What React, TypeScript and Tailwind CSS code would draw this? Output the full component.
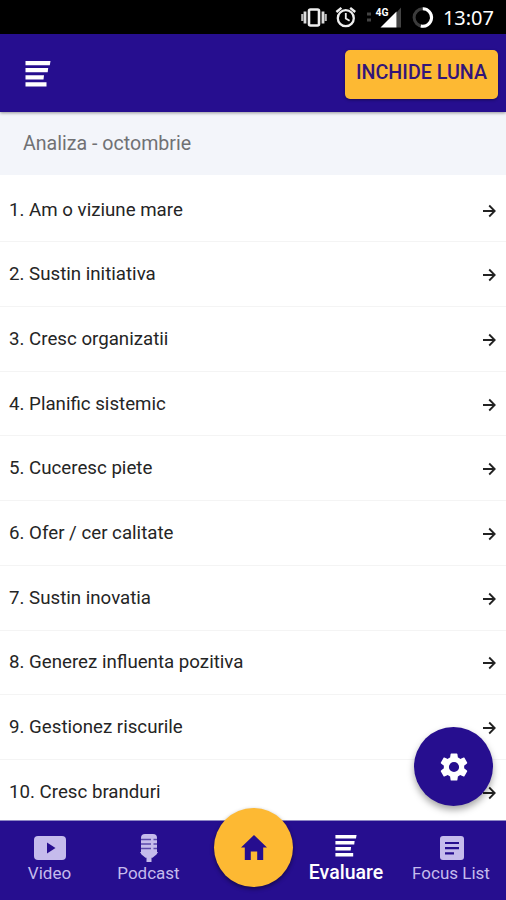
import type { ReactNode } from "react";

const items = [
  "Am o viziune mare",
  "Sustin initiativa",
  "Cresc organizatii",
  "Planific sistemic",
  "Cuceresc piete",
  "Ofer / cer calitate",
  "Sustin inovatia",
  "Generez influenta pozitiva",
  "Gestionez riscurile",
  "Cresc branduri",
];

function BarsIcon({ className }: { className: string }) {
  return (
    <svg viewBox="0 0 26 26" className={className} fill="currentColor">
      <path d="M.5 0h25L24.800 4.200H.5zM.5 7.100h22.700L22.700 11.300H.5zM.5 14.200h18.500L18.500 18.400H.5zM.5 21.300h21V25.500H.5z" />
    </svg>
  );
}

function StatusBar() {
  return (
    <div className="flex h-[34px] shrink-0 items-center justify-end bg-black pr-[12px] text-white">
      <svg width="144" height="34" viewBox="0 0 144 34" fill="none">
        {/* vibrate */}
        <rect x="19" y="9.500" width="10" height="16" rx="1.5" stroke="#eee" strokeWidth="2.600" />
        <path d="M15 11.500v12M33 11.500v12" stroke="#ddd" strokeWidth="2.800" />
        <path d="M12.300 14v7M35.700 14v7" stroke="#bbb" strokeWidth="2.200" />
        {/* alarm */}
        <circle cx="55.800" cy="18.200" r="8" stroke="#eee" strokeWidth="2.300" />
        <path d="M55.800 13v5.400l3.800 2.400" stroke="#eee" strokeWidth="1.800" />
        <path d="M46.400 12l5-4.200M65.200 12l-5-4.200" stroke="#eee" strokeWidth="2.400" />
        {/* signal */}
        <path d="M77 14h4M77 20h4" stroke="#444" strokeWidth="2.800" />
        <path d="M111 7.500v20h-4.500v-15z" fill="#444" />
        <path d="M90.500 27.500L106.500 11.500v16z" fill="#fff" />
        <text x="85.500" y="16.300" fill="#fff" fontSize="10.500" fontWeight="700" fontFamily="Roboto, sans-serif" textLength="13" lengthAdjust="spacingAndGlyphs">4G</text>
        {/* sync ring */}
        <circle cx="132.800" cy="17.500" r="8.700" stroke="#3c3c3c" strokeWidth="3" />
        <path d="M132.800 8.800a8.700 8.700 0 1 1-2 17.150" stroke="#fff" strokeWidth="3" />
      </svg>
      <span className="ml-[8px] w-[52px] pt-[2px] text-right font-['Noto_Sans',sans-serif] text-[20px] leading-none whitespace-nowrap">13:07</span>
    </div>
  );
}

function NavItem({ label, className, children }: { label: string; className: string; children: ReactNode }) {
  return (
    <button type="button" className={`flex shrink-0 flex-col items-center ${className}`}>
      <span className="flex h-[41px] items-center pt-[13px]">{children}</span>
      <span className="whitespace-nowrap leading-[22px]">{label}</span>
    </button>
  );
}

export default function App() {
  return (
    <div className="relative flex h-[900px] w-[506px] flex-col overflow-hidden bg-white font-[Roboto,sans-serif]">
      <StatusBar />

      <header className="z-10 flex h-[78px] shrink-0 items-center justify-between bg-[#260e8f] pl-[25px] pr-2 text-white shadow-[0_1px_3px_rgba(0,0,0,0.4)]">
        <button type="button" aria-label="Meniu" className="pt-[2px]">
          <BarsIcon className="size-[26px]" />
        </button>
        <button type="button" className="mt-[2px] h-[49px] w-[153px] rounded-[5px] bg-[#fdb933] pb-[2px] text-[19.700px] font-medium whitespace-nowrap text-[#33157a] shadow-[0_1px_3px_rgba(0,0,0,0.4)]">
          INCHIDE LUNA
        </button>
      </header>

      <h1 className="h-[63px] shrink-0 bg-[#f3f5fa] pl-[23px] text-[19.600px] leading-[64px] text-[#707174]">
        Analiza - octombrie
      </h1>

      <ul className="min-h-0 flex-1 overflow-hidden pt-[2.700px]">
        {items.map((item, i) => (
          <li key={item} className="flex h-[64.700px] items-center justify-between border-b border-[#f4f4f4] pr-[10px] pl-[9px] text-[18.700px] text-[#252525]">
            <span>{i + 1}. {item}</span>
            <svg width="14" height="14" viewBox="0 0 14 14" fill="none" stroke="#222" strokeWidth="1.800" className="mt-[2px]">
              <path d="M1 7h11.500M7.200 1.500L12.700 7l-5.500 5.500" />
            </svg>
          </li>
        ))}
      </ul>

      {/* settings button floats over the list */}
      <button type="button" aria-label="Setari" className="absolute top-[727px] left-[414px] flex size-[79px] items-center justify-center rounded-full bg-[#260e8f] text-white shadow-[0_4px_7px_rgba(0,0,0,0.35)]">
        <svg viewBox="0 0 24 24" className="size-[34px]" fill="currentColor">
          <path d="M19.140 12.940c.04-.3.060-.610.060-.940 0-.320-.020-.640-.070-.940l2.030-1.580c.180-.140.230-.410.120-.610l-1.920-3.320c-.120-.220-.370-.290-.590-.220l-2.390.960c-.5-.380-1.030-.7-1.620-.940l-.360-2.540c-.040-.240-.240-.410-.480-.410h-3.840c-.240 0-.430.170-.470.410l-.360 2.540c-.590.240-1.130.570-1.620.940l-2.390-.960c-.220-.080-.470 0-.590.220L2.740 8.870c-.120.210-.080.470.120.610l2.030 1.580c-.050.3-.090.630-.090.940s.020.640.070.940l-2.030 1.580c-.180.140-.230.410-.120.610l1.920 3.320c.120.220.370.290.590.220l2.390-.960c.5.380 1.030.7 1.620.940l.360 2.540c.050.240.240.410.480.410h3.840c.240 0 .440-.170.470-.410l.360-2.540c.590-.240 1.130-.560 1.620-.940l2.390.960c.220.080.470 0 .590-.220l1.920-3.320c.120-.220.070-.470-.120-.610l-2.010-1.580zM12 15.600A3.600 3.600 0 1 1 12 8.400a3.600 3.600 0 0 1 0 7.200z" />
        </svg>
      </button>

      <nav className="relative flex h-[80px] shrink-0 border-t border-[#8f88c4] bg-[#260e8f] text-[17px] text-[#c5bbec]">
        <NavItem label="Video" className="w-[99px]">
          <svg width="32" height="24" viewBox="0 0 32 24">
            <rect width="32" height="24" rx="4" fill="currentColor" />
            <path d="M13 6.500v11l8.500-5.500z" fill="#260e8f" />
          </svg>
        </NavItem>
        <NavItem label="Podcast" className="w-[99px]">
          <svg width="18" height="28" viewBox="0 0 18 28">
            <path d="M5 0h8a4 4 0 0 1 4 4v14H1V4a4 4 0 0 1 4-4z" fill="currentColor" />
            <path d="M1 5.500h10M1 10h10M1 14.500h10M13.500 5.500H17M13.500 10H17M13.500 14.500H17" stroke="#5a48aa" strokeWidth="1.400" />
            <path d="M0 18h18l-1.500 2.500-4 3.200h-1V28h-5v-4.300h-1l-4-3.200z" fill="currentColor" />
          </svg>
        </NavItem>
        <div className="w-[98px] shrink-0" />
        <NavItem label="Evaluare" className="w-[100px] text-[19.500px] font-medium text-white">
          <BarsIcon className="mb-[4px] size-[22px]" />
        </NavItem>
        <NavItem label="Focus List" className="w-[110px]">
          <svg width="24" height="24" viewBox="0 0 24 24" className="ml-px">
            <rect width="24" height="24" rx="3" fill="currentColor" />
            <path d="M5 7h14M5 12.200h14M5 17.400h9" stroke="#260e8f" strokeWidth="2.200" />
          </svg>
        </NavItem>

        <button type="button" aria-label="Acasa" className="absolute top-[-13px] left-[214px] flex size-[79px] items-center justify-center rounded-full bg-[#fdb933] text-[#260e8f] shadow-[0_2px_4px_rgba(0,0,0,0.45)]">
          <svg viewBox="0 0 26 25" className="h-[25px] w-[26px]" fill="currentColor">
            <path d="M13 0L26 12.500h-3.800V25h-6v-8.500H9.800V25h-6V12.500H0z" />
          </svg>
        </button>
      </nav>
    </div>
  );
}
